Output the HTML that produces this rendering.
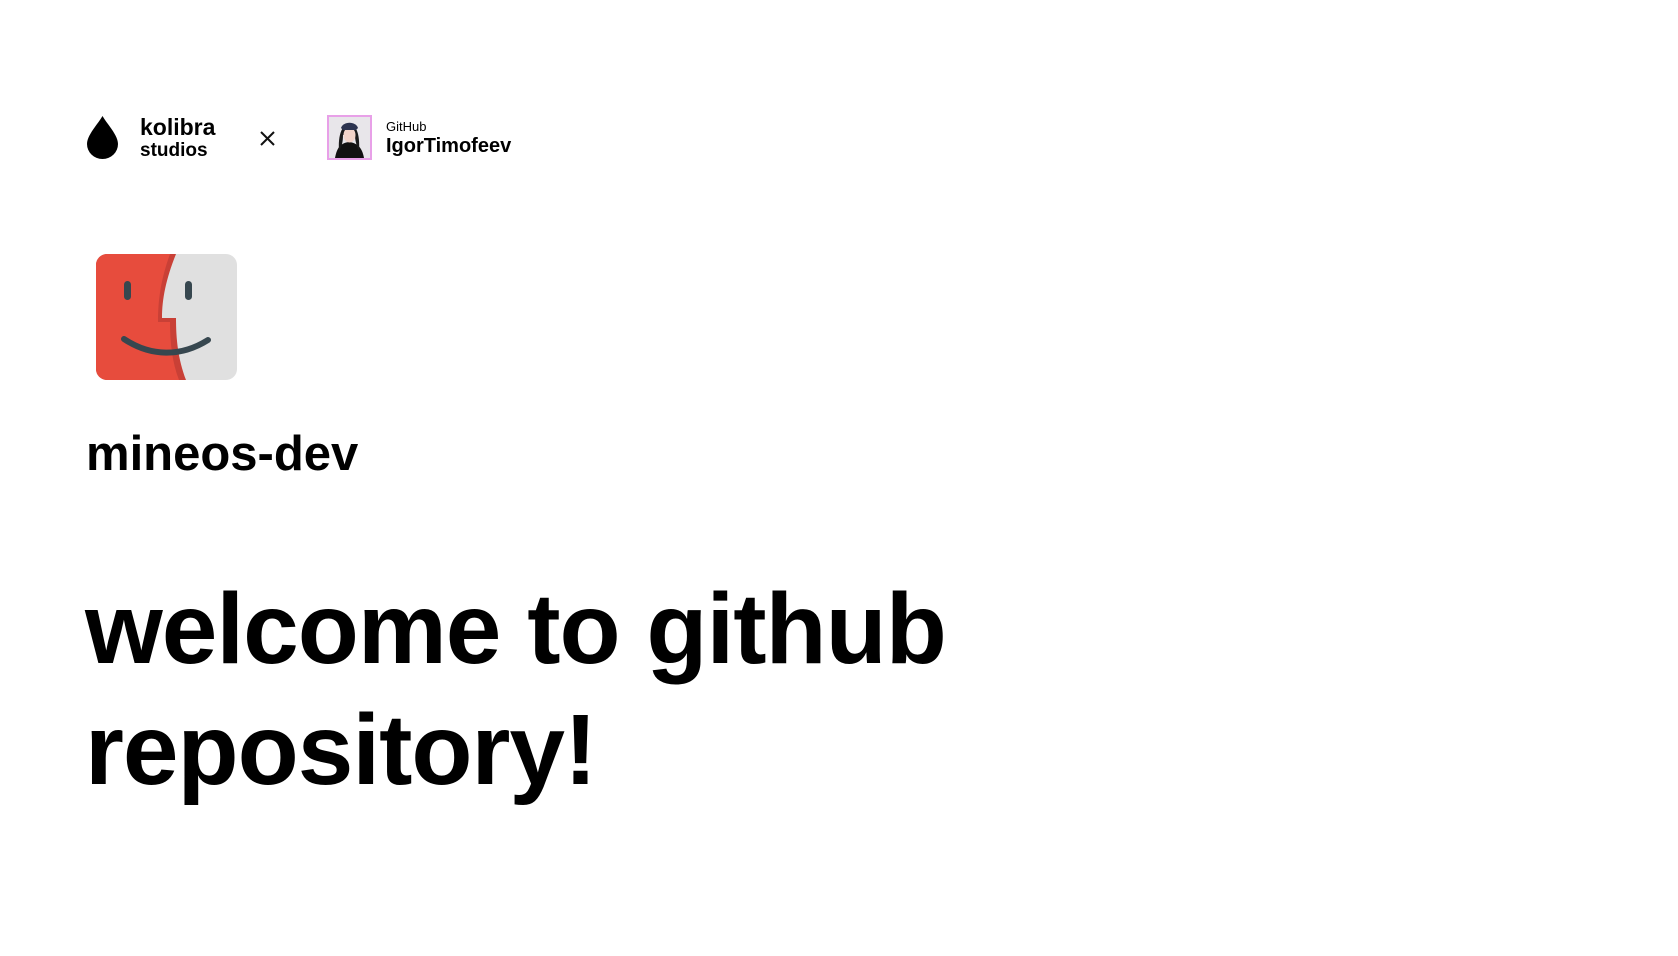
<!DOCTYPE html>
<html><head><meta charset="utf-8"><style>
html,body{margin:0;padding:0;background:#fff;width:1678px;height:956px;overflow:hidden;font-family:"Liberation Sans",sans-serif;color:#000}
.a{position:absolute;white-space:nowrap}
</style></head><body>
<svg class="a" style="left:87px;top:116px" width="31" height="43" viewBox="0 0 31 43"><path d="M15.5 0 C11 8 0 19 0 28 A15.5 15 0 0 0 31 28 C31 19 20 8 15.5 0Z" fill="#000"/></svg>
<div class="a" style="left:140px;top:115px;font-size:23px;font-weight:bold;line-height:24px">kolibra</div>
<div class="a" style="left:140px;top:141px;font-size:19px;font-weight:bold;line-height:20px">studios</div>
<svg class="a" style="left:260px;top:131px" width="15" height="15" viewBox="0 0 15 15"><path d="M1 1L14 14M14 1L1 14" stroke="#111" stroke-width="2"/></svg>
<div class="a" style="left:327px;top:115px;width:41px;height:41px;border:2px solid #e8a0e8;background:#ddd;overflow:hidden">
<svg width="41" height="41" viewBox="0 0 41 41"><rect width="41" height="41" fill="#e8e6ea"/><path d="M6 41 C8 30 12 26 20 25 C28 26 33 30 35 41Z" fill="#111"/><path d="M10 34 C9 20 12 8 20 7 C28 8 31 18 30 34 C27 28 26 22 26 18 L14 18 C14 24 13 30 10 34Z" fill="#1a1a1a"/><ellipse cx="20.5" cy="18" rx="6" ry="7.5" fill="#f2d3c8"/><path d="M12 11 C14 4 27 4 29 11 L27 13 L14 13Z" fill="#2c3350"/></svg></div>
<div class="a" style="left:386px;top:120px;font-size:13px;line-height:14px">GitHub</div>
<div class="a" style="left:386px;top:135px;font-size:20px;line-height:22px;font-weight:bold">IgorTimofeev</div>
<svg class="a" style="left:96px;top:254px" width="141" height="126" viewBox="0 0 141 126">
<defs><clipPath id="c"><rect width="141" height="126" rx="11"/></clipPath></defs>
<g clip-path="url(#c)"><rect width="141" height="126" fill="#e0e0e0"/>
<path d="M0 0 H80 C70 25 66 45 66 64 H80 C80 85 82 105 90 126 H0Z" fill="#c94036"/>
<path d="M0 0 H74 C65 25 62 45 62 68 H74 C74 88 76 108 83 126 H0Z" fill="#e74c3d"/></g>
<rect x="28" y="27" width="7" height="19" rx="3.5" fill="#37474f"/>
<rect x="89" y="27" width="7" height="19" rx="3.5" fill="#37474f"/>
<path d="M28 85 C55 103 85 103 112 86" fill="none" stroke="#37474f" stroke-width="6" stroke-linecap="round"/></svg>
<div class="a" style="left:86px;top:426px;font-size:49px;line-height:56px;font-weight:bold">mineos-dev</div>
<div class="a" style="left:85px;top:569px;font-size:100px;line-height:121px;font-weight:bold;letter-spacing:-1px">welcome to github<br>repository!</div>
</body></html>
